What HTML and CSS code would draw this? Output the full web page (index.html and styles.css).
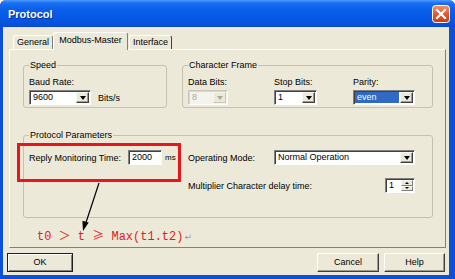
FILE: index.html
```html
<!doctype html>
<html>
<head>
    <meta charset="utf-8">
    <title>Protocol</title>
    <link rel="stylesheet" href="styles.css">
</head>
<body>
<div class="window">
    <div class="titlebar">
        <span class="title">Protocol</span>
        <svg class="close" width="18" height="18" viewBox="0 0 18 18">
            <defs>
                <linearGradient id="cg" x1="0" y1="0" x2="0" y2="1">
                    <stop offset="0" stop-color="#f2926e"/>
                    <stop offset="0.5" stop-color="#e25a30"/>
                    <stop offset="1" stop-color="#c73a12"/>
                </linearGradient>
            </defs>
            <rect x="0.5" y="0.5" width="17" height="17" rx="3" fill="url(#cg)" stroke="#fff"/>
            <path d="M5 5 L13 13 M13 5 L5 13" stroke="#fff" stroke-width="2.2" stroke-linecap="square"/>
        </svg>
    </div>

    <div class="frame">
        <div class="tabs">
            <span class="tab tab-general">General</span>
            <span class="tab tab-active">Modbus-Master</span>
            <span class="tab tab-interface">Interface</span>
        </div>

        <div class="pane">
            <div class="group-row">
                <fieldset class="group speed">
                    <legend>Speed</legend>
                    <div class="label">Baud Rate:</div>
                    <div class="line">
                        <span class="combo w62"><span class="value">9600</span><span class="drop"></span></span>
                        <span class="unit">Bits/s</span>
                    </div>
                </fieldset>

                <fieldset class="group char-frame">
                    <legend>Character Frame</legend>
                    <div class="cols">
                        <div class="col">
                            <div class="label">Data Bits:</div>
                            <span class="combo disabled w40"><span class="value">8</span><span class="drop"></span></span>
                        </div>
                        <div class="col">
                            <div class="label">Stop Bits:</div>
                            <span class="combo w43"><span class="value">1</span><span class="drop"></span></span>
                        </div>
                        <div class="col">
                            <div class="label">Parity:</div>
                            <span class="combo w62"><span class="value sel">even</span><span class="drop"></span></span>
                        </div>
                    </div>
                </fieldset>
            </div>

            <fieldset class="group params">
                <legend>Protocol Parameters</legend>
                <div class="params-body">
                    <div class="params-left">
                        <span class="reply-label">Reply Monitoring Time:</span>
                        <span class="field w34">2000</span>
                        <span class="ms">ms</span>
                    </div>
                    <div class="params-right">
                        <div class="prow">
                            <span class="plabel">Operating Mode:</span>
                            <span class="combo w141"><span class="value">Normal Operation</span><span class="drop"></span></span>
                        </div>
                        <div class="prow prow2">
                            <span>Multiplier Character delay time:</span>
                            <span class="spin">
                                <span class="value">1</span>
                                <span class="arrows"><span class="up"></span><span class="down"></span></span>
                            </span>
                        </div>
                    </div>
                </div>
            </fieldset>

            <div class="formula">t0 <span class="cjk">＞</span> t <span class="cjk">≥</span> Max(t1.t2)<span class="ret">↵</span></div>
        </div>

        <div class="buttons">
            <span class="btn btn-ok">OK</span>
            <span class="btn btn-cancel">Cancel</span>
            <span class="btn btn-help">Help</span>
        </div>
    </div>

    <!-- annotation drawn over the dialog -->
    <div class="annot">
        <div class="redbox"></div>
        <svg class="arrow" width="455" height="279" viewBox="0 0 455 279">
            <line x1="99" y1="183" x2="85.5" y2="224" stroke="#000" stroke-width="1.2"/>
            <polygon points="83,231 88.7,222.6 82.4,220.8" fill="#000"/>
        </svg>
    </div>
</div>
</body>
</html>
```

FILE: styles.css
```css
* { margin: 0; padding: 0; box-sizing: border-box; }
body { font: 9px "Liberation Sans", Arial, sans-serif; color: #000; background: #fff; }

.window {
    position: relative;
    width: 455px;
    height: 279px;
    border-radius: 6px 6px 0 0;
    overflow: hidden;
    background: #0b4fd8;
}

.titlebar {
    height: 27px;
    display: flex;
    align-items: center;
    justify-content: space-between;
    padding: 0 5px 0 8px;
    background: linear-gradient(#4c9dff 0, #1a6ff2 3px, #0b60ea 9px, #0558e5 17px, #0753dd 23px, #0a4bcf 27px);
}

.title {
    color: #fff;
    font: bold 11px "Liberation Sans", Arial, sans-serif;
    text-shadow: 1px 1px #0b2f8f;
}

.close { display: block; }

.frame {
    height: 252px;
    background: #ece9d8;
    border-left: 3px solid #0c50d9;
    border-right: 6px solid #0c50d9;
    border-bottom: 4px solid #0c50d9;
}

/* tabs */
.tabs {
    height: 22px;
    display: flex;
    align-items: flex-end;
    padding-left: 10px;
}

.tab {
    height: 14px;
    line-height: 13px;
    text-align: center;
    border: 1px solid;
    border-color: #fff #7f7f7f transparent #fff;
    border-bottom: 0;
    border-radius: 3px 3px 0 0;
}

.tab-general { width: 40px; }

.tab-active {
    width: 75px;
    height: 18px;
    line-height: 15px;
    margin-bottom: -1px;
    position: relative;
    z-index: 1;
    background: #ece9d8;
}

.tab-interface { width: 43px; margin-left: 1px; border-right-color: #404040; }

.pane {
    height: 199px;
    margin: 0 3px 0 6px;
    border: 1px solid;
    border-color: #fff #808080 #808080 #fff;
    padding: 10px 12px 0 13px;
}

/* group boxes */
.group-row {
    display: flex;
    gap: 15px;
}

.group {
    border: 1px solid #c4c1b2;
    border-radius: 3px;
    padding: 6px 5px 2px;
    min-width: 0;
}

.group legend {
    padding: 0 1px;
    line-height: 11px;
}

.speed { width: 144px; }
.char-frame { flex: 1; }

.label {
    line-height: 11px;
    margin-bottom: 2px;
}

.line {
    display: flex;
    align-items: center;
}

.unit { margin-left: 7px; }

.cols {
    display: grid;
    grid-template-columns: 86px 79px 1fr;
}

/* combo boxes */
.combo {
    display: flex;
    height: 15px;
    padding: 1px;
    background: #fff;
    border: 1px solid;
    border-color: #808080 #fff #fff #808080;
    box-shadow: inset 1px 1px #404040;
}

.combo .value {
    flex: 1;
    line-height: 11px;
    padding-left: 2px;
    white-space: nowrap;
}

.combo .value.sel {
    background: #316ac5;
    color: #fff;
    margin-right: 1px;
}

.combo .drop {
    width: 13px;
    display: flex;
    align-items: center;
    justify-content: center;
    background: #ece9d8;
    border: 1px solid;
    border-color: #f7f6f0 #404040 #404040 #f7f6f0;
    box-shadow: inset -1px -1px #9d9b8e;
}

.combo .drop::after {
    content: "";
    border-left: 3.5px solid transparent;
    border-right: 3.5px solid transparent;
    border-top: 4px solid #000;
}

.combo.disabled {
    background: #f4f3ee;
    border-color: #c9c7ba #fff #fff #c9c7ba;
    box-shadow: inset 1px 1px #d8d6cb;
    color: #aca899;
}

.combo.disabled .drop {
    border-color: #f7f6f0 #c9c7ba #c9c7ba #f7f6f0;
    box-shadow: none;
}

.combo.disabled .drop::after { border-top-color: #aca899; }

.w34 { width: 34px; }
.w40 { width: 40px; }
.w43 { width: 43px; }
.w62 { width: 62px; }
.w141 { width: 141px; }

/* protocol parameters */
.params {
    margin-top: 22px;
    padding: 9px 5px 24px;
}

.params-body { display: flex; }

.params-left {
    width: 159px;
    height: 15px;
    display: flex;
    align-items: center;
}

.reply-label { width: 99px; }

.field {
    height: 15px;
    line-height: 11px;
    padding: 1px 1px 1px 3px;
    background: #fff;
    border: 1px solid;
    border-color: #808080 #fff #fff #808080;
    box-shadow: inset 1px 1px #404040;
}

.ms { margin-left: 3px; font-size: 8px; }

.params-right { width: 227px; }

.prow {
    display: flex;
    align-items: center;
    height: 15px;
}

.plabel { width: 86px; }

.prow2 {
    margin-top: 13px;
    justify-content: space-between;
}

.spin {
    display: flex;
    width: 30px;
    height: 15px;
    padding: 1px;
    background: #fff;
    border: 1px solid;
    border-color: #808080 #fff #fff #808080;
    box-shadow: inset 1px 1px #404040;
}

.spin .value {
    flex: 1;
    line-height: 11px;
    padding-left: 2px;
}

.spin .arrows {
    width: 12px;
    display: flex;
    flex-direction: column;
}

.spin .up, .spin .down {
    flex: 1;
    display: flex;
    align-items: center;
    justify-content: center;
    background: #ece9d8;
    border: 1px solid;
    border-color: #f7f6f0 #808080 #808080 #f7f6f0;
}

.spin .up::after {
    content: "";
    border-left: 2px solid transparent;
    border-right: 2px solid transparent;
    border-bottom: 2px solid #000;
}

.spin .down::after {
    content: "";
    border-left: 2px solid transparent;
    border-right: 2px solid transparent;
    border-top: 2px solid #000;
}

/* red formula */
.formula {
    margin: 8px 0 0 14px;
    line-height: 14px;
    color: #e4191b;
    font: 12px "Liberation Mono", "Noto Sans CJK SC", monospace;
    white-space: nowrap;
}

.formula .cjk { font-family: "Noto Sans CJK SC", sans-serif; }

.formula .ret {
    color: #9a9a9a;
    font: 9px "DejaVu Sans", sans-serif;
    margin-left: 1px;
}

/* dialog buttons */
.buttons {
    display: flex;
    gap: 5px;
    margin-top: 5px;
    padding: 0 4px;
}

.btn {
    height: 19px;
    line-height: 16px;
    text-align: center;
    background: #ece9d8;
    border: 1px solid;
    border-color: #fff #404040 #404040 #fff;
    box-shadow: inset -1px -1px #9d9b8e;
}

.btn-ok {
    width: 66px;
    margin-right: auto;
    border-color: #202020;
    box-shadow: inset 1px 1px #fff, inset -1px -1px #808080;
}

.btn-cancel { width: 62px; }
.btn-help { width: 61px; }

/* annotation layer */
.annot {
    position: absolute;
    inset: 0;
    pointer-events: none;
}

.redbox {
    position: absolute;
    left: 17px;
    top: 143px;
    width: 164px;
    height: 39px;
    border: 3px solid #e8161c;
}

.arrow {
    position: absolute;
    left: 0;
    top: 0;
}
```
